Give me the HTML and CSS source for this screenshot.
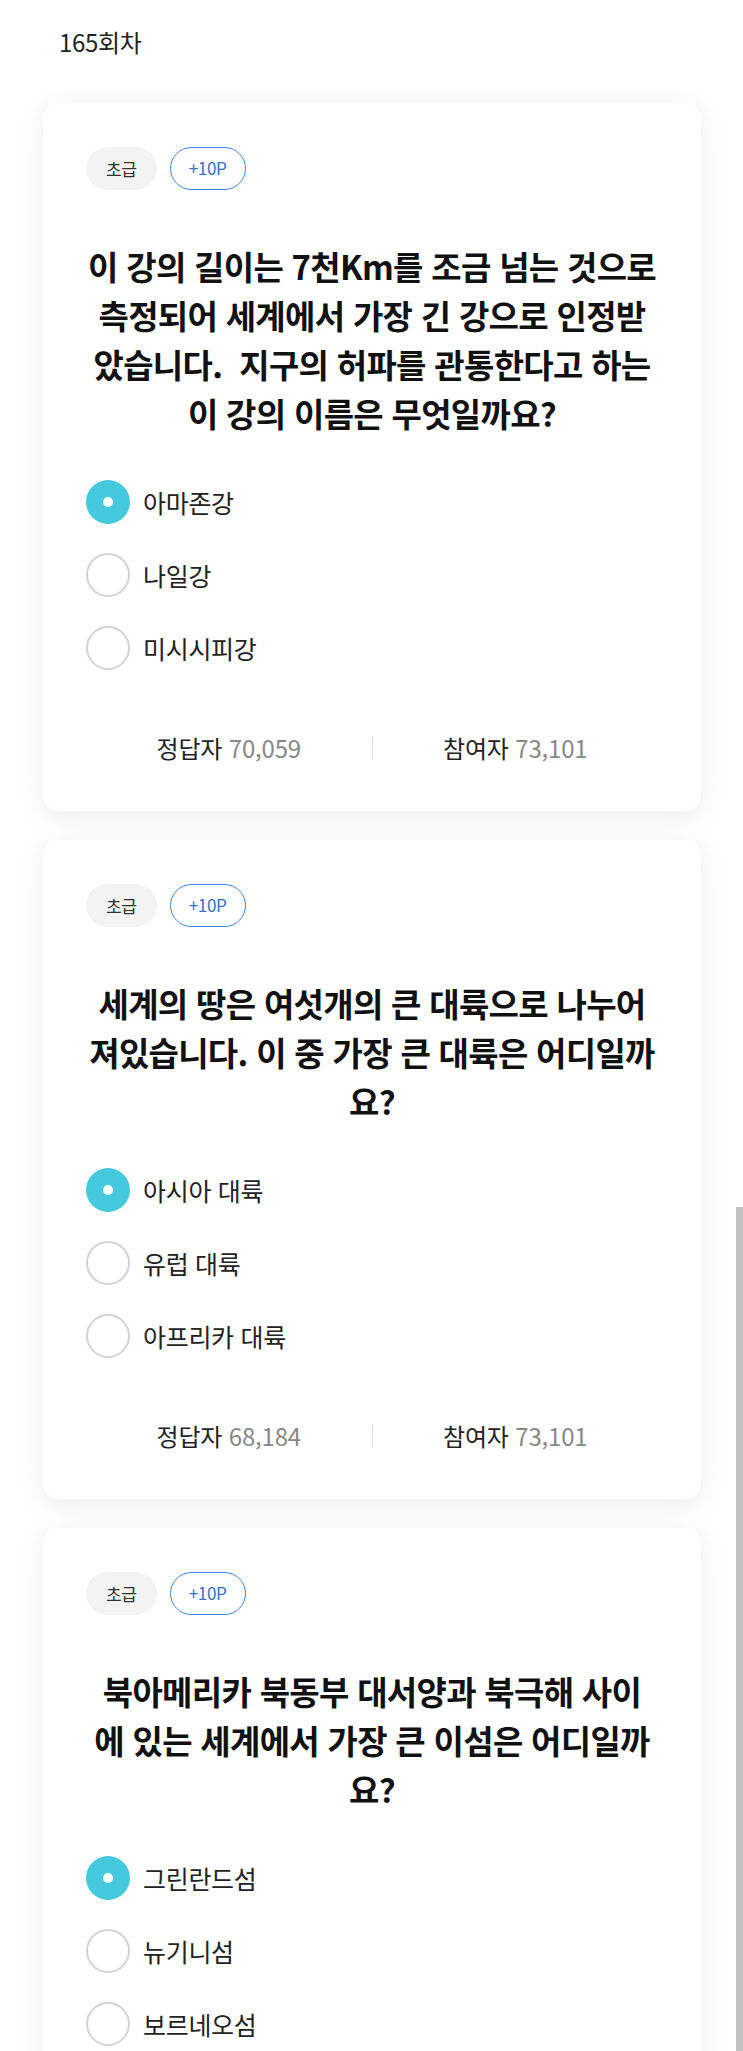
FILE: index.html
```html
<!DOCTYPE html>
<html lang="ko">
<head>
<meta charset="UTF-8">
<title>퀴즈 165회차</title>
<link rel="stylesheet" href="styles.css">
</head>
<body>
<div class="round">165회차</div>

<div class="quiz-list">
    <div class="card">
        <div class="tags">
            <span class="tag level">초급</span>
            <span class="tag point">+10P</span>
        </div>
        <p class="question">이 강의 길이는 7천Km를 조금 넘는 것으로<br> 측정되어 세계에서 가장 긴 강으로 인정받<br>았습니다.&nbsp; 지구의 허파를 관통한다고 하는<br>이 강의 이름은 무엇일까요?</p>
        <ul class="options">
            <li class="option checked"><span class="radio"></span>아마존강</li>
            <li class="option"><span class="radio"></span>나일강</li>
            <li class="option"><span class="radio"></span>미시시피강</li>
        </ul>
        <div class="stats">
            <div class="stat">정답자 <span class="num">70,059</span></div>
            <span class="divider"></span>
            <div class="stat">참여자 <span class="num">73,101</span></div>
        </div>
    </div>

    <div class="card">
        <div class="tags">
            <span class="tag level">초급</span>
            <span class="tag point">+10P</span>
        </div>
        <p class="question">세계의 땅은 여섯개의 큰 대륙으로 나누어<br>져있습니다. 이 중 가장 큰 대륙은 어디일까<br>요?</p>
        <ul class="options">
            <li class="option checked"><span class="radio"></span>아시아 대륙</li>
            <li class="option"><span class="radio"></span>유럽 대륙</li>
            <li class="option"><span class="radio"></span>아프리카 대륙</li>
        </ul>
        <div class="stats">
            <div class="stat">정답자 <span class="num">68,184</span></div>
            <span class="divider"></span>
            <div class="stat">참여자 <span class="num">73,101</span></div>
        </div>
    </div>

    <div class="card">
        <div class="tags">
            <span class="tag level">초급</span>
            <span class="tag point">+10P</span>
        </div>
        <p class="question">북아메리카 북동부 대서양과 북극해 사이<br>에 있는 세계에서 가장 큰 이섬은 어디일까<br>요?</p>
        <ul class="options">
            <li class="option checked"><span class="radio"></span>그린란드섬</li>
            <li class="option"><span class="radio"></span>뉴기니섬</li>
            <li class="option"><span class="radio"></span>보르네오섬</li>
        </ul>
        <div class="stats">
            <div class="stat">정답자 <span class="num">61,209</span></div>
            <span class="divider"></span>
            <div class="stat">참여자 <span class="num">73,101</span></div>
        </div>
    </div>
</div>

<div class="scroll-thumb"></div>
</body>
</html>
```

FILE: styles.css
```css
html {
    scrollbar-width: none;
}
body {
    margin: 0;
    font-family: "Noto Sans CJK KR", "Noto Sans", sans-serif;
    background-color: #fff;
    color: #222;
}
.round {
    padding: 27px 59px 0;
    font-size: 24px;
    line-height: 30px;
    letter-spacing: -0.3px;
}
.quiz-list {
    display: flex;
    flex-direction: column;
    gap: 29px;
    margin-top: 46px;
    padding: 0 42px 0 43px;
}
.card {
    background-color: #fff;
    border-radius: 16px;
    padding: 44px 43px 48px;
    box-shadow: 0 6px 28px rgba(0, 0, 0, 0.08);
}
.tags {
    display: flex;
    gap: 13px;
}
.tag {
    box-sizing: border-box;
    height: 43px;
    line-height: 43px;
    padding: 0 20px;
    border-radius: 22px;
    font-size: 17px;
    letter-spacing: -0.3px;
}
.tag.level {
    background-color: #f3f3f3;
    color: #333;
}
.tag.point {
    line-height: 40px;
    padding: 0 18px;
    border: 1.5px solid #3d82d6;
    color: #2f74c9;
}
.question {
    margin: 52px 0 0;
    font-size: 33px;
    font-weight: bold;
    line-height: 49px;
    letter-spacing: -0.7px;
    text-align: center;
    white-space: nowrap;
    color: #111;
}
.options {
    list-style: none;
    margin: 42px 0 0;
    padding: 0;
    display: flex;
    flex-direction: column;
    gap: 29px;
}
.option {
    display: flex;
    align-items: center;
    gap: 13px;
    height: 44px;
    font-size: 25px;
    letter-spacing: -0.3px;
}
.radio {
    box-sizing: border-box;
    width: 44px;
    height: 44px;
    border-radius: 50%;
    border: 2px solid #d3d3d3;
    display: flex;
    align-items: center;
    justify-content: center;
}
.option.checked .radio {
    border: none;
    background-color: #45c9dd;
}
.option.checked .radio::after {
    content: "";
    width: 10px;
    height: 10px;
    border-radius: 50%;
    background-color: #fff;
}
.stats {
    display: flex;
    align-items: center;
    margin-top: 63px;
    font-size: 24px;
    line-height: 30px;
    letter-spacing: -0.2px;
}
.stat {
    flex: 1;
    text-align: center;
}
.divider {
    width: 1px;
    height: 23px;
    background-color: #ddd;
}
.num {
    color: #888;
}
.scroll-thumb {
    position: fixed;
    top: 1207px;
    right: 0;
    bottom: 0;
    width: 7px;
    background-color: #c1c1c1;
}
```
